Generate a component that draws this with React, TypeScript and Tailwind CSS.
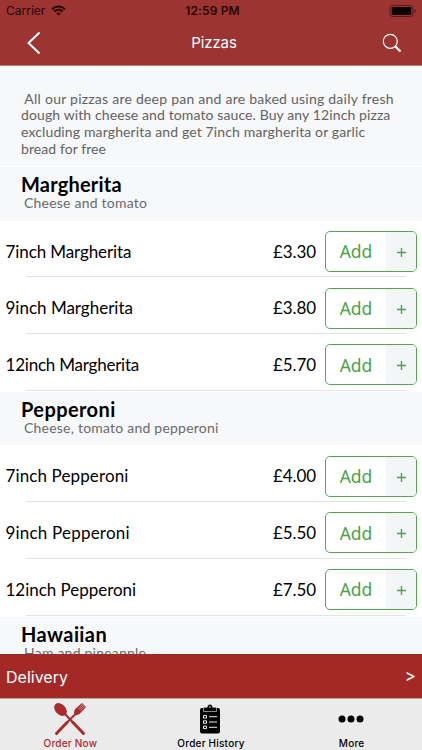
const intro = [
  { text: ' All our pizzas are deep pan and are baked using daily fresh', tracking: 'tracking-[0.24px]' },
  { text: 'dough with cheese and tomato sauce. Buy any 12inch pizza', tracking: 'tracking-[0.11px]' },
  { text: 'excluding margherita and get 7inch margherita or garlic', tracking: 'tracking-[0.13px]' },
  { text: 'bread for free', tracking: 'tracking-[0.08px]' },
]

const sections = [
  {
    name: 'Margherita',
    description: 'Cheese and tomato',
    tracking: 'tracking-[0.2px]',
    items: [
      { name: '7inch Margherita', price: '£3.30', tracking: 'tracking-[-0.1px]' },
      { name: '9inch Margherita', price: '£3.80', tracking: 'tracking-[0px]' },
      { name: '12inch Margherita', price: '£5.70', tracking: 'tracking-[-0.22px]' },
    ],
  },
  {
    name: 'Pepperoni',
    description: 'Cheese, tomato and pepperoni',
    tracking: 'tracking-[0.4px]',
    items: [
      { name: '7inch Pepperoni', price: '£4.00', tracking: 'tracking-[0.12px]' },
      { name: '9inch Pepperoni', price: '£5.50', tracking: 'tracking-[0.2px]' },
      { name: '12inch Pepperoni', price: '£7.50', tracking: 'tracking-[-0.03px]' },
    ],
  },
  { name: 'Hawaiian', description: 'Ham and pineapple', tracking: 'tracking-[0.4px]', items: [] },
]

function StatusBar() {
  return (
    <div className="grid h-[21px] grid-cols-3 items-center px-[6px] text-[12px] leading-[21px] text-[#260606]">
      <div className="flex items-center gap-[6px]">
        <span>Carrier</span>
        <svg width="15" height="11" viewBox="0 0 15 11" fill="none" stroke="currentColor" strokeWidth="1.9">
          <path d="M1 4.2c3.8-3.6 9.2-3.6 13 0" />
          <path d="M3.3 6.5c2.5-2.3 5.9-2.3 8.4 0" />
          <path d="M5.3 8.2c1.3-1.2 3.1-1.2 4.4 0L7.5 10.5z" fill="currentColor" stroke="none" />
        </svg>
      </div>
      <span className="ml-[3px] whitespace-nowrap text-center font-semibold tracking-[0.15px]">12:59 PM</span>
      <svg className="-mr-[1px] justify-self-end" width="28" height="12" viewBox="0 0 28 12">
        <rect x="1" y=".5" width="23" height="11" rx="2.5" fill="none" stroke="#571a1a" />
        <rect x="2.7" y="2" width="19.6" height="8" rx="1" fill="#0d0202" />
        <path d="M25.5 4v4c1.800-.7 1.800-3.300 0-4z" fill="#571a1a" />
      </svg>
    </div>
  )
}

function Header() {
  return (
    <header className="h-[66px] shrink-0 border-b border-[#c08080] bg-[#9c3431]">
      <StatusBar />
      <div className="grid h-[44px] grid-cols-3 items-center pl-[26px] pr-[20px] text-white">
        <svg width="15" height="24" viewBox="0 0 15 24" fill="none" stroke="currentColor" strokeWidth="2">
          <path d="M13.5 1.5L2.5 12l11 10.5" />
        </svg>
        <h1 className="text-center text-[15px] tracking-[-0.1px]">Pizzas</h1>
        <svg className="justify-self-end" width="20" height="20" viewBox="0 0 20 20" fill="none" stroke="currentColor">
          <circle cx="8.3" cy="8.3" r="7" strokeWidth="1.2" />
          <path d="M13 13l5.5 5.5" strokeWidth="2.2" />
        </svg>
      </div>
    </header>
  )
}

function AddButton() {
  return (
    <button className="flex h-[41px] w-[92px] shrink-0 overflow-hidden rounded-[5px] border border-[#55a653] bg-white text-[#4ba449]">
      <span className="flex h-full w-[60px] items-center justify-center font-['Noto_Sans',sans-serif] text-[17.5px]">Add</span>
      <span className="flex h-full flex-1 items-center justify-center bg-[#f4f5f7] pt-[2px]">
        <svg width="9" height="9" viewBox="0 0 9 9" stroke="currentColor" strokeWidth="1.4">
          <path d="M4.5 0v9M0 4.5h9" />
        </svg>
      </span>
    </button>
  )
}

function Row({ name, price, tracking }: { name: string; price: string; tracking: string }) {
  return (
    <div className="relative flex h-[56.7px] items-center px-[5px] pt-[4.6px] after:absolute after:bottom-0 after:left-[26px] after:right-[16px] after:h-px after:bg-[#e2e2e2]">
      <span className={`flex-1 pl-[0.5px] font-['Lato',sans-serif] text-[17px] ${tracking}`}>{name}</span>
      <span className="mr-[9px] font-['Lato',sans-serif] text-[17px] tracking-[-0.1px]">{price}</span>
      <AddButton />
    </div>
  )
}

function OrderNowIcon() {
  return (
    <svg width="34" height="34" viewBox="0 0 34 34">
      <g fill="currentColor">
        <ellipse cx="7.5" cy="7.5" rx="7.3" ry="5.2" transform="rotate(46 7.5 7.5)" />
        <path d="M21.500 13c-1-2.700-.3-5 1.500-6.700L29 1l4 4-5.500 6c-1.700 1.800-3.500 2.600-6 2z" />
      </g>
      <g fill="none" stroke="currentColor" strokeLinecap="round">
        <path d="M11 11l9 9.5M23 11.5l-9 9" strokeWidth="2" />
        <path d="M20 20.5l10.5 11M14 20.5l-10.5 11" strokeWidth="3" />
      </g>
      <path d="M30 2l-4.600 4.700M31 3l-4.600 4.700M32 4l-4.600 4.700" stroke="#ebebeb" strokeWidth=".45" />
    </svg>
  )
}

function OrderHistoryIcon() {
  return (
    <svg width="22" height="30" viewBox="0 0 22 30">
      <rect x="1" y="4" width="20" height="25.5" rx="2" />
      <path d="M4.5 3.3h3.7c.3-4 5.3-4 5.6 0h3.7v4.2h-13z" stroke="#ebebeb" strokeWidth=".6" />
      <circle cx="11" cy="3" r=".8" fill="#ebebeb" />
      <path d="M4.5 11.5h3V14h-3zM4.500 16.800h3v2.500h-3zM4.500 22.100h3v2.500h-3zM10 12.700h8M10 18h8M10 23.300h8" fill="none" stroke="#ebebeb" />
    </svg>
  )
}

function TabBar() {
  return (
    <nav className="grid h-[52px] shrink-0 grid-cols-3 border-t border-[#b9a5a5] bg-[#ebebeb] text-[10px] font-medium leading-[12px] tracking-[0.22px]">
      <div className="flex flex-col items-center text-[#ab2a2a]">
        <div className="flex h-[38px] items-center pt-[2px]"><OrderNowIcon /></div>
        Order Now
      </div>
      <div className="flex flex-col items-center">
        <div className="flex h-[38px] items-center pr-[2px] pt-[2px]"><OrderHistoryIcon /></div>
        Order History
      </div>
      <div className="flex flex-col items-center">
        <div className="flex h-[38px] items-center pr-px pt-[2px]">
          <svg width="26" height="8" viewBox="0 0 26 8">
            <circle cx="4" cy="4" r="3.5" />
            <circle cx="13" cy="4" r="3.5" />
            <circle cx="22" cy="4" r="3.5" />
          </svg>
        </div>
        More
      </div>
    </nav>
  )
}

export default function App() {
  return (
    <div className="flex h-[750px] w-[422px] flex-col overflow-hidden bg-white font-['Inter',sans-serif] text-black">
      <Header />
      <main className="min-h-0 flex-1 overflow-hidden">
        <p className="h-[100px] bg-[#f7f8fa] pl-[21px] pt-[24.6px] font-['Lato',sans-serif] text-[14px] leading-[16.8px] text-[#626262]">
          {intro.map((line) => (
            <span key={line.text} className={`block whitespace-pre ${line.tracking}`}>{line.text}</span>
          ))}
        </p>
        {sections.map((section) => (
          <section key={section.name} className="pt-px">
            <div className="h-[53.7px] bg-[#f7f8fa] pl-[21px] pt-[6.4px] font-['Lato',sans-serif]">
              <h2 className={`text-[20px] font-bold leading-[22px] ${section.tracking}`}>{section.name}</h2>
              <p className="pl-[3px] text-[14px] leading-[16px] tracking-[0.22px] text-[#6a6a6a]">{section.description}</p>
            </div>
            {section.items.map((item) => (
              <Row key={item.name} {...item} />
            ))}
          </section>
        ))}
      </main>
      <div className="flex h-[44px] shrink-0 items-center justify-between bg-[#a32927] pl-[6px] pr-[6px] pt-[2px] text-[16px] text-white">
        <span>Delivery</span>
        <span className="text-[17px]">&gt;</span>
      </div>
      <TabBar />
    </div>
  )
}
